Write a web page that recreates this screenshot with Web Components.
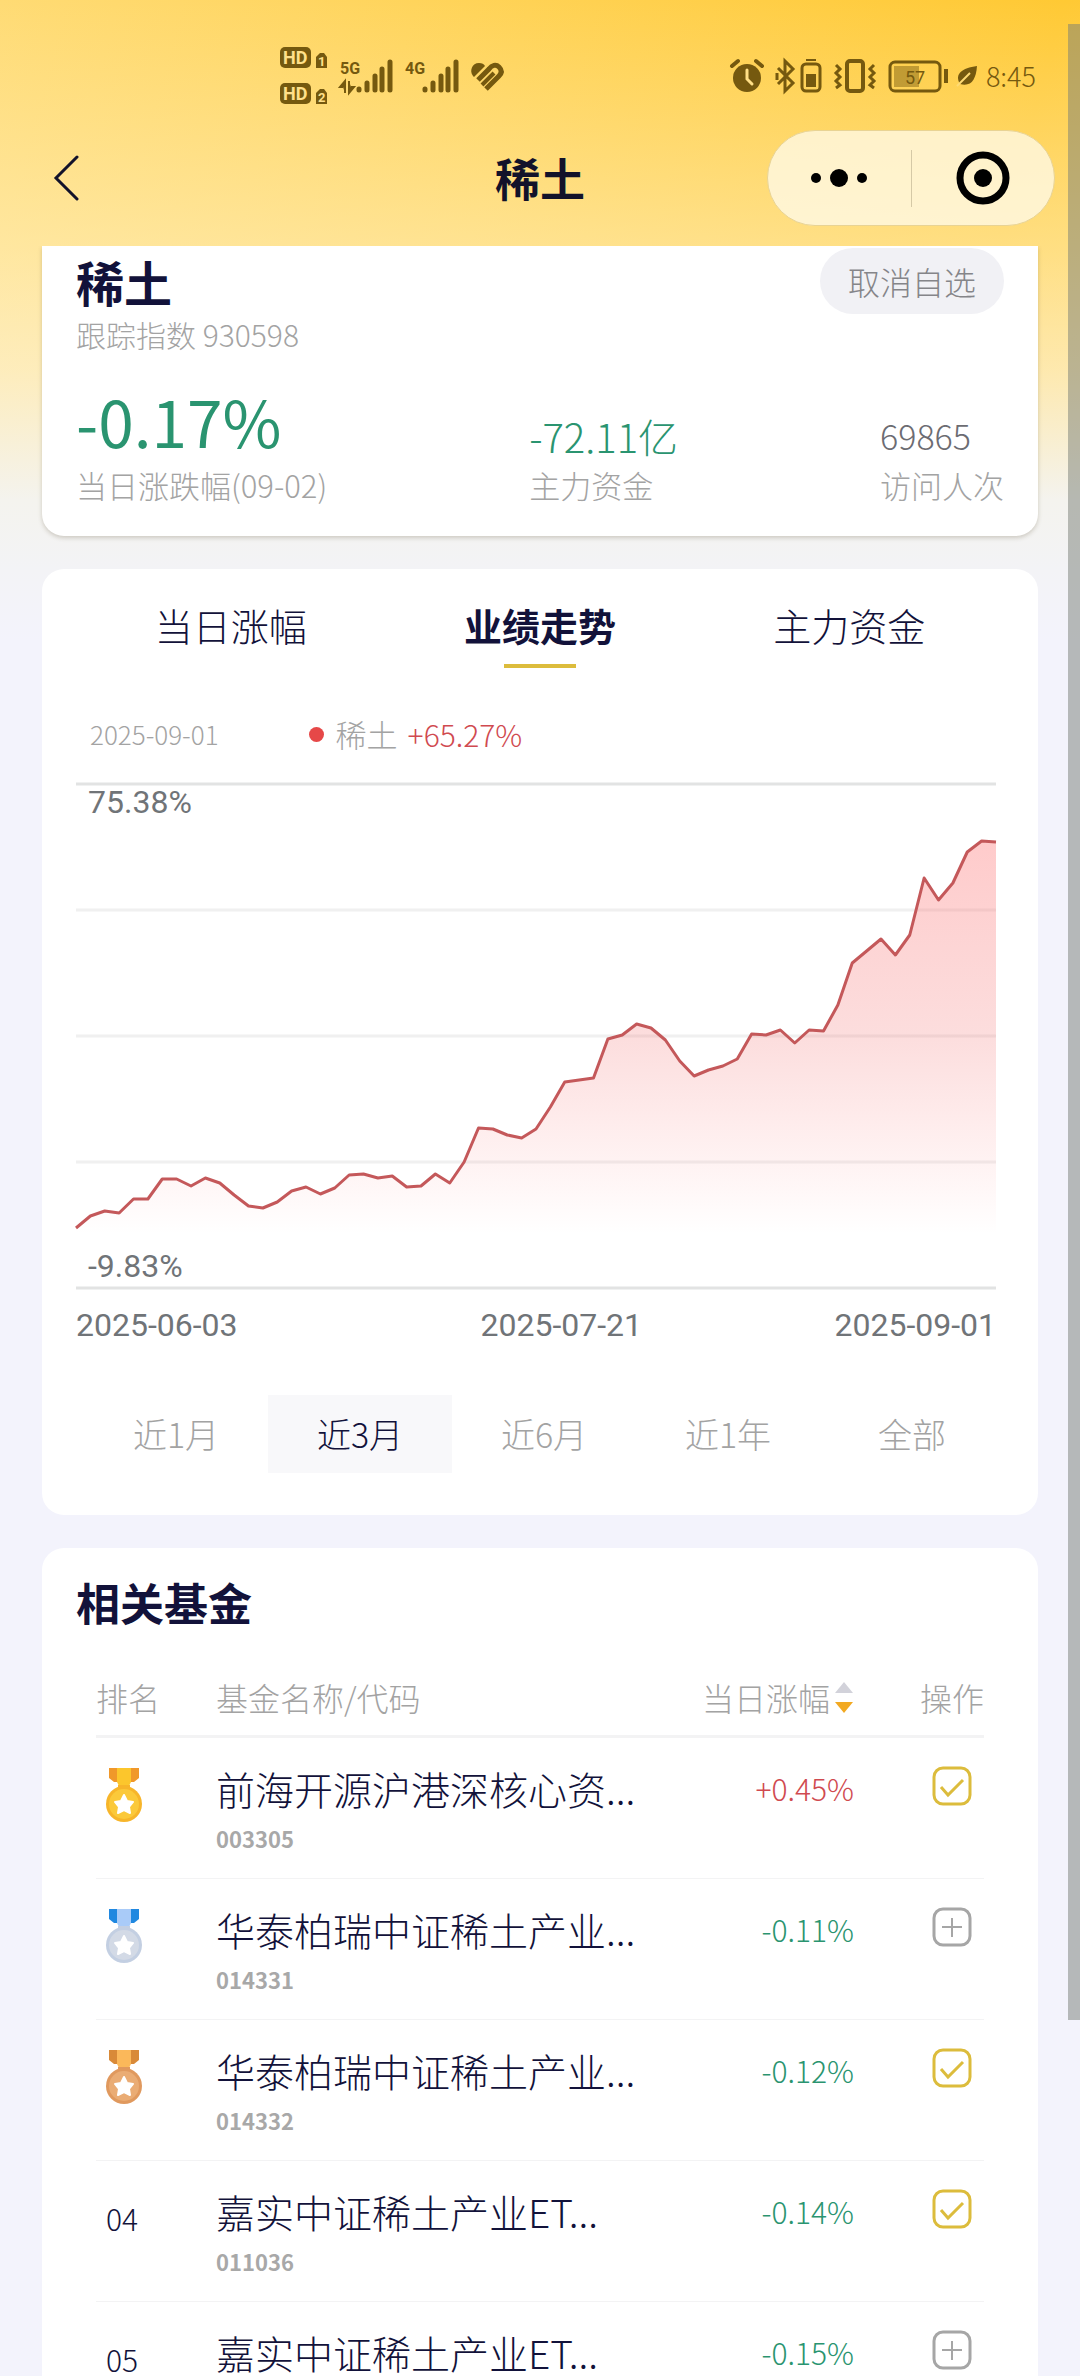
<!DOCTYPE html>
<html lang="zh-CN">
<head>
<meta charset="utf-8">
<title>稀土</title>
<style>
  body {
    margin: 0;
    font-family: "Noto Sans CJK SC", "Noto Sans", sans-serif;
    font-weight: 300;
    color: #12123a;
    --muted: #a3a3a3;
    --up: #d04a50;
    --down: #2a9470;
    --gold: #dcbc3c;
  }
</style>
</head>
<body>

<app-shell>
  <status-bar slot="header"></status-bar>
  <nav-bar slot="header">稀土</nav-bar>

  <sector-summary>
    <span slot="name">稀土</span>
    <span slot="code">跟踪指数 930598</span>
    <stat-item size="large" trend="down" label="当日涨跌幅(09-02)">-0.17%</stat-item>
    <stat-item trend="down" label="主力资金">-72.11亿</stat-item>
    <stat-item size="small" label="访问人次">69865</stat-item>
  </sector-summary>

  <panel-card>
    <tab-strip items="当日涨幅,业绩走势,主力资金" active="1"></tab-strip>
    <trend-chart max="75.38%" min="-9.83%" start="2025-06-03" middle="2025-07-21" end="2025-09-01">
      <span slot="date">2025-09-01</span>
      <span slot="name">稀土</span>
      <span slot="change">+65.27%</span>
    </trend-chart>
    <range-picker items="近1月,近3月,近6月,近1年,全部" active="1"></range-picker>
  </panel-card>

  <panel-card>
    <fund-table heading="相关基金"></fund-table>
  </panel-card>
</app-shell>

<script>
  // small helper: open shadow root filled with markup
  function stamp(el, html) {
    const root = el.attachShadow({mode: 'open'});
    root.innerHTML = html;
    return root;
  }

  customElements.define('app-shell', class extends HTMLElement {
    constructor() {
      super();
      stamp(this, `
        <style>
          :host {
            display: flex;
            flex-direction: column;
            position: relative;
            height: 100vh;
            overflow: hidden;
            background:
              linear-gradient(to bottom, rgba(255,246,214,0) 0, rgba(255,244,208,.5) 250px, rgba(253,243,214,.75) 370px, #f4f3ee 500px, #f3f3f6 570px, #f3f3fc 640px),
              linear-gradient(105deg, #ffdb74 0, #ffc934 62%, #ffcf48 100%);
          }
          main {
            flex: 1;
            min-height: 0;
            overflow: hidden;
            padding: 0 42px;
            display: flex;
            flex-direction: column;
            gap: 33px;
          }
          .thumb {
            position: absolute;
            right: 0;
            top: 1%;
            width: 12px;
            height: 84%;
            background: rgba(120, 125, 118, .5);
          }
        </style>
        <slot name="header"></slot>
        <main><slot></slot></main>
        <div class="thumb"></div>
      `);
    }
  });

  customElements.define('status-bar', class extends HTMLElement {
    constructor() {
      super();
      const bars = x => `
        <g stroke="currentColor" stroke-width="5" stroke-linecap="round">
          <path d="M${x} 30v1M${x + 8} 24v7M${x + 16} 17v14M${x + 23} 10v21M${x + 31} 3v28"/>
        </g>`;
      stamp(this, `
        <style>
          :host {
            display: flex;
            justify-content: space-between;
            align-items: center;
            height: 60px;
            padding: 46px 44px 0 280px;
            color: #75590f;
          }
          div { display: flex; align-items: center; gap: 12px; }
          .tight { gap: 8px; }
          svg { display: block; fill: none; overflow: visible; }
          text { font-family: Roboto, sans-serif; font-weight: 700; fill: currentColor; }
          time { font-size: 27px; line-height: 40px; }
        </style>
        <div>
          <svg width="48" height="60" viewBox="0 0 48 60">
            <rect width="31" height="21" y="1" rx="5" fill="currentColor"/>
            <rect width="31" height="21" y="37" rx="5" fill="currentColor"/>
            <path d="M36 22V11l4-4h4l3 4v11zM36 58V47l4-4h4l3 4v11z" fill="currentColor"/>
            <g style="color:#ffe08a">
              <text x="3" y="18" font-size="18">HD</text>
              <text x="3" y="54" font-size="18">HD</text>
              <text x="38" y="20" font-size="13">1</text>
              <text x="38" y="56" font-size="13">2</text>
            </g>
          </svg>
          <svg width="53" height="34" viewBox="0 0 53 34">
            <text x="0" y="15" font-size="16">5G</text>
            <path d="M5 34V22l-5 6h3M9 22v12l5-6h-3" stroke="currentColor" stroke-width="2" fill="currentColor"/>
            ${bars(19)}
          </svg>
          <svg width="53" height="34" viewBox="0 0 53 34">
            <text x="0" y="15" font-size="16">4G</text>
            ${bars(20)}
          </svg>
          <svg width="34" height="29" viewBox="0 0 34 29">
            <path d="M3 14C-1 9 2 1 9 1c3 0 5 1 6 3L4 15z" fill="currentColor"/>
            <path d="M8 18 19 7c3-4 7-5 10-2s3 6 0 9L16 27" stroke="currentColor" stroke-width="5"/>
            <path d="M12 23 24 11" stroke="currentColor" stroke-width="4"/>
          </svg>
        </div>
        <div>
          <svg width="34" height="34" viewBox="0 0 34 34">
            <circle cx="17" cy="19" r="14" fill="currentColor"/>
            <path d="M2 7l6-5M32 7l-6-5" stroke="currentColor" stroke-width="4" stroke-linecap="round"/>
            <path d="M17 11v9l5 5" stroke="#ffdf86" stroke-width="3" stroke-linecap="round"/>
          </svg>
          <svg width="46" height="34" viewBox="0 0 46 34">
            <path d="M2 9l15 15-8 8V2l8 8L2 25M1 14v7" stroke="currentColor" stroke-width="3"/>
            <rect x="26" y="5" width="18" height="27" rx="4" stroke="currentColor" stroke-width="3"/>
            <path d="M30 1h10" stroke="currentColor" stroke-width="2"/>
            <path d="M30 15h10v13H30z" fill="currentColor"/>
          </svg>
          <svg width="42" height="34" viewBox="0 0 42 34">
            <rect x="13" y="2" width="16" height="30" rx="3" stroke="currentColor" stroke-width="4"/>
            <path d="M2 6l4 4-4 4 4 4-4 4 4 4-4 3M40 6l-4 4 4 4-4 4 4 4-4 4 4 3" stroke="currentColor" stroke-width="3"/>
          </svg>
          <div class="tight">
            <svg width="61" height="34" viewBox="0 0 61 34">
              <rect x="2" y="3" width="50" height="29" rx="5" stroke="currentColor" stroke-width="3"/>
              <rect x="6" y="7" width="25" height="21" fill="currentColor" opacity=".45"/>
              <path d="M58 10v14" stroke="currentColor" stroke-width="4"/>
              <text x="17" y="25" font-size="18" style="font-weight:400">57</text>
            </svg>
            <svg width="21" height="22" viewBox="0 0 21 22">
              <path d="M20 1C19 15 14 22 3 19-3 9 5 3 20 1z" fill="currentColor"/>
              <path d="M0 21 13 8" stroke="#ffdb74" stroke-width="2"/>
            </svg>
            <time>8:45</time>
          </div>
        </div>
      `);
    }
  });

  customElements.define('nav-bar', class extends HTMLElement {
    constructor() {
      super();
      stamp(this, `
        <style>
          :host {
            display: grid;
            grid-template-columns: 1fr auto 1fr;
            align-items: center;
            padding: 24px 25px 20px;
            color: #12122a;
          }
          h1 { margin: 0; font-size: 45px; line-height: 60px; font-weight: 700; }
          button { border: 0; background: none; padding: 0; color: inherit; }
          .back { justify-self: start; padding: 12px 28px; }
          svg { display: block; }
          .capsule {
            justify-self: end;
            display: flex;
            align-items: center;
            box-sizing: border-box;
            height: 96px;
            width: 288px;
            border: 1px solid #e8d394;
            border-radius: 48px;
            background: rgba(255, 251, 236, .75);
            color: #000;
          }
          .capsule button { flex: 1; display: grid; place-items: center; height: 100%; }
          i { width: 1px; height: 57px; background: #d5c9a6; }
        </style>
        <button class="back" aria-label="返回">
          <svg width="26" height="46" viewBox="0 0 26 46" fill="none" stroke="currentColor" stroke-width="3" stroke-linecap="round"><path d="M24 2 3 23l21 21"/></svg>
        </button>
        <h1><slot></slot></h1>
        <div class="capsule">
          <button aria-label="更多">
            <svg width="58" height="20" viewBox="0 0 58 20"><circle cx="6" cy="10" r="5"/><circle cx="29" cy="10" r="9"/><circle cx="52" cy="10" r="5"/></svg>
          </button>
          <i></i>
          <button aria-label="关闭">
            <svg width="54" height="54" viewBox="0 0 54 54"><circle cx="27" cy="27" r="23" fill="none" stroke="#000" stroke-width="7"/><circle cx="27" cy="27" r="9"/></svg>
          </button>
        </div>
      `);
    }
  });

  customElements.define('sector-summary', class extends HTMLElement {
    constructor() {
      super();
      stamp(this, `
        <style>
          :host {
            display: block;
            flex: none;
            padding: 2px 34px 28px;
            background: #fff;
            border-radius: 0 0 22px 22px;
            box-shadow: 0 2px 4px rgba(90, 80, 50, .25);
          }
          header { display: flex; justify-content: space-between; align-items: center; }
          h2 { margin: 0; font-size: 48px; line-height: 66px; font-weight: 700; }
          button {
            font: inherit;
            font-size: 32px;
            line-height: 66px;
            padding: 0 28px;
            border: 0;
            border-radius: 33px;
            background: #f1f1f5;
            color: #858589;
          }
          p { margin: 0; font-size: 30px; line-height: 40px; color: var(--muted); }
          .stats { display: flex; justify-content: space-between; align-items: flex-end; padding-top: 24px; }
        </style>
        <header>
          <h2><slot name="name"></slot></h2>
          <button>取消自选</button>
        </header>
        <p><slot name="code"></slot></p>
        <div class="stats"><slot></slot></div>
      `);
    }
  });

  customElements.define('stat-item', class extends HTMLElement {
    constructor() {
      super();
      const root = stamp(this, `
        <style>
          :host { display: block; color: #6c6c72; }
          :host([trend="down"]) { color: var(--down); }
          b { display: block; font-weight: 300; font-size: 40px; line-height: 52px; }
          :host([size="small"]) b { font-size: 34px; }
          :host([size="large"]) b { font-size: 64px; line-height: 84px; font-weight: 400; }
          small { display: block; font-size: 31px; line-height: 46px; color: var(--muted); }
        </style>
        <b><slot></slot></b>
        <small></small>
      `);
      root.querySelector('small').textContent = this.getAttribute('label');
    }
  });

  customElements.define('panel-card', class extends HTMLElement {
    constructor() {
      super();
      stamp(this, `
        <style>
          :host { display: block; flex: none; padding: 27px 34px; background: #fff; border-radius: 22px; }
        </style>
        <slot></slot>
      `);
    }
  });

  customElements.define('tab-strip', class extends HTMLElement {
    constructor() {
      super();
      const active = Number(this.getAttribute('active'));
      const tabs = this.getAttribute('items').split(',').map((t, i) =>
        `<button role="tab" aria-selected="${i === active}">${t}</button>`).join('');
      stamp(this, `
        <style>
          :host { display: block; }
          div { display: flex; }
          button {
            flex: 1;
            display: grid;
            justify-items: center;
            gap: 10px;
            padding: 0;
            border: 0;
            background: none;
            font: inherit;
            font-size: 38px;
            line-height: 58px;
            color: inherit;
          }
          button::after { content: ""; width: 72px; height: 4px; }
          [aria-selected="true"] { font-weight: 700; }
          [aria-selected="true"]::after { background: var(--gold); }
        </style>
        <div role="tablist">${tabs}</div>
      `);
    }
  });

  // distance of each daily point from the top grid line; the plot is 504 high
  const series = [
    444, 432, 427, 429, 415, 415, 395, 395, 402, 394, 399, 411, 422, 424, 418, 407,
    403, 410, 404, 391, 390, 394, 392, 403, 402, 390, 399, 378, 344, 345, 351, 354,
    345, 323, 298, 296, 294, 255, 251, 240, 244, 256, 277, 292, 286, 282, 275, 250,
    251, 246, 259, 246, 247, 221, 179, 167, 155, 171, 151, 94, 116, 99, 68, 57, 58
  ];

  customElements.define('trend-chart', class extends HTMLElement {
    constructor() {
      super();
      const last = series.length - 1;
      const points = series.map((y, x) => x + ',' + y).join(' ');
      const grid = [0, 126, 252, 378, 504].map(y =>
        `<line x2="${last}" y1="${y}" y2="${y}" stroke="${y % 504 ? '#f0f0f0' : '#e2e3e3'}"/>`).join('');
      const at = name => this.getAttribute(name);
      stamp(this, `
        <style>
          :host { display: block; padding: 42px 8px 0 0; }
          .legend { display: flex; align-items: center; line-height: 48px; padding-left: 14px; color: var(--muted); }
          .date { font-size: 26px; margin-right: 90px; }
          .dot { width: 15px; height: 15px; border-radius: 50%; background: #e64848; margin-right: 12px; }
          .name { font-size: 31px; margin-right: 10px; }
          .change { font-size: 30px; color: var(--up); }
          .plot { display: grid; margin-top: 26px; font: 400 32px/36px Roboto, sans-serif; color: #707478; }
          .plot > * { grid-area: 1 / 1; }
          .plot span { padding-left: 12px; }
          .max { align-self: start; }
          .min { align-self: end; margin-bottom: 4px; }
          svg { display: block; width: 100%; height: 504px; overflow: visible; }
          line, polyline { vector-effect: non-scaling-stroke; }
          line { stroke-width: 3px; }
          .dates {
            display: grid;
            grid-template-columns: 8fr auto 7fr;
            padding-top: 17px;
            font: 400 32px/40px Roboto, sans-serif;
            color: #707478;
          }
          .dates :last-child { text-align: right; }
        </style>
        <div class="legend">
          <span class="date"><slot name="date"></slot></span>
          <span class="dot"></span>
          <span class="name"><slot name="name"></slot></span>
          <span class="change"><slot name="change"></slot></span>
        </div>
        <div class="plot">
          <svg viewBox="0 0 ${last} 504" preserveAspectRatio="none">
            <defs>
              <linearGradient id="fade" x1="0" y1="57" x2="0" y2="450" gradientUnits="userSpaceOnUse">
                <stop offset="0" stop-color="#f66" stop-opacity=".34"/>
                <stop offset=".5" stop-color="#f26666" stop-opacity=".22"/>
                <stop offset="1" stop-color="#f66" stop-opacity="0"/>
              </linearGradient>
            </defs>
            ${grid}
            <polygon points="0,504 ${points} ${last},504" fill="url(#fade)"/>
            <polyline points="${points}" fill="none" stroke="#c4585a" stroke-width="3" stroke-linejoin="round"/>
          </svg>
          <span class="max">${at('max')}</span>
          <span class="min">${at('min')}</span>
        </div>
        <div class="dates"><span>${at('start')}</span><span>${at('middle')}</span><span>${at('end')}</span></div>
      `);
    }
  });

  customElements.define('range-picker', class extends HTMLElement {
    constructor() {
      super();
      const active = Number(this.getAttribute('active'));
      const buttons = this.getAttribute('items').split(',').map((t, i) =>
        `<button aria-pressed="${i === active}">${t}</button>`).join('');
      stamp(this, `
        <style>
          :host { display: flex; padding: 50px 0 15px 8px; }
          button {
            flex: 1;
            padding: 0;
            border: 0;
            background: none;
            font: inherit;
            font-size: 34px;
            line-height: 78px;
            color: var(--muted);
          }
          [aria-pressed="true"] { background: #f8f8fa; color: #12123a; }
        </style>
        ${buttons}
      `);
    }
  });

  customElements.define('rank-medal', class extends HTMLElement {
    constructor() {
      super();
      const palettes = {
        gold: ['#f0982a', '#fcc62c', '#f7b52a', '#fbc93a'],
        silver: ['#2088e0', '#a9cbf8', '#c3cfe2', '#d3dae6'],
        bronze: ['#d98a38', '#fbb85a', '#e0995e', '#eaac74']
      };
      const [side, ribbon, rim, face] = palettes[this.getAttribute('kind')];
      stamp(this, `
        <style>
          :host { display: inline-block; }
          svg { display: block; }
        </style>
        <svg width="36" height="54" viewBox="0 0 36 54">
          <path d="M3 0h10v14H8l-5-4zM33 0H23v14h5l5-4z" fill="${side}"/>
          <path d="M11 0h14v14l-3 6h-8l-3-6z" fill="${ribbon}"/>
          <path d="M12 17h12v4H12z" fill="${rim}"/>
          <circle cx="18" cy="36" r="18" fill="${rim}"/>
          <circle cx="18" cy="36" r="15" fill="${face}"/>
          <path d="M18 27l3 6 6 1-4 5 1 6-6-3-6 3 1-6-4-5 6-1z" fill="#fff" stroke="#fff" stroke-width="2" stroke-linejoin="round"/>
        </svg>
      `);
    }
  });

  customElements.define('watch-toggle', class extends HTMLElement {
    constructor() {
      super();
      const on = this.hasAttribute('checked');
      stamp(this, `
        <style>
          :host { display: inline-block; color: #a6a6a6; }
          :host([checked]) { color: var(--gold); }
          label { display: grid; }
          input, svg { grid-area: 1 / 1; width: 40px; height: 40px; margin: 0; }
          input { appearance: none; }
          svg { pointer-events: none; }
        </style>
        <label>
          <input type="checkbox" aria-label="自选" ${on ? 'checked' : ''}>
          <svg viewBox="0 0 40 40" fill="none" stroke="currentColor" stroke-width="3">
            <rect x="2" y="2" width="36" height="36" rx="9"/>
            <path d="${on ? 'M9 21l7 8 15-15' : 'M20 11v19M10 20h20'}" ${on ? '' : 'stroke-width="2"'}/>
          </svg>
        </label>
      `);
    }
  });

  const funds = [
    {medal: 'gold', name: '前海开源沪港深核心资...', code: '003305', change: '+0.45%', watched: true},
    {medal: 'silver', name: '华泰柏瑞中证稀土产业...', code: '014331', change: '-0.11%'},
    {medal: 'bronze', name: '华泰柏瑞中证稀土产业...', code: '014332', change: '-0.12%', watched: true},
    {rank: '04', name: '嘉实中证稀土产业ET...', code: '011036', change: '-0.14%', watched: true},
    {rank: '05', name: '嘉实中证稀土产业ET...', code: '', change: '-0.15%'}
  ];

  customElements.define('fund-table', class extends HTMLElement {
    constructor() {
      super();
      const rows = funds.map(f => `
        <tr>
          <td class="rank">${f.medal ? `<rank-medal kind="${f.medal}"></rank-medal>` : f.rank}</td>
          <td class="name">${f.name}<small>${f.code}</small></td>
          <td class="change ${f.change[0] === '+' ? 'up' : 'down'}">${f.change}</td>
          <td class="action"><watch-toggle ${f.watched ? 'checked' : ''}></watch-toggle></td>
        </tr>`).join('');
      stamp(this, `
        <style>
          :host { display: block; }
          h2 { margin: 0; font-size: 44px; line-height: 54px; font-weight: 700; }
          .wrap { padding: 40px 20px 0; }
          table { width: 100%; border-collapse: collapse; table-layout: fixed; }
          th {
            padding: 0 0 10px;
            height: 56px;
            font-size: 32px;
            line-height: 56px;
            font-weight: 300;
            text-align: left;
            color: var(--muted);
            white-space: nowrap;
            border-bottom: 3px solid #f3f3f4;
          }
          td { height: 140px; padding: 0; vertical-align: top; border-bottom: 1px solid #f3f3f4; }
          .rank { width: 120px; }
          th.change { width: 180px; }
          th.action { width: 64px; }
          td.rank { box-sizing: border-box; padding: 30px 0 0 10px; font-size: 30px; line-height: 54px; }
          .name { font-size: 39px; line-height: 50px; white-space: nowrap; }
          td.name, td.change { padding-top: 25px; height: 115px; }
          th.name { font-size: 32px; line-height: 56px; }
          small { display: block; font-size: 22px; font-weight: 700; color: #a8a8a8; }
          .change { text-align: right; }
          td.change { font-size: 30px; line-height: 50px; }
          .action { padding-left: 66px; text-align: center; }
          td.action { padding-top: 28px; height: 112px; }
          .up { color: var(--up); }
          .down { color: var(--down); }
          th button {
            display: inline-flex;
            align-items: center;
            gap: 4px;
            padding: 0;
            border: 0;
            background: none;
            font: inherit;
            color: inherit;
          }
        </style>
        <h2>${this.getAttribute('heading')}</h2>
        <div class="wrap">
          <table>
            <thead>
              <tr>
                <th class="rank">排名</th>
                <th class="name">基金名称/代码</th>
                <th class="change"><button>当日涨幅<svg width="20" height="32" viewBox="0 0 20 32"><path d="M1 12 10 1l9 11z" fill="#d2d2da"/><path d="M1 21l9 11 9-11z" fill="#f2a922"/></svg></button></th>
                <th class="action">操作</th>
              </tr>
            </thead>
            <tbody>${rows}</tbody>
          </table>
        </div>
      `);
    }
  });
</script>
</body>
</html>
